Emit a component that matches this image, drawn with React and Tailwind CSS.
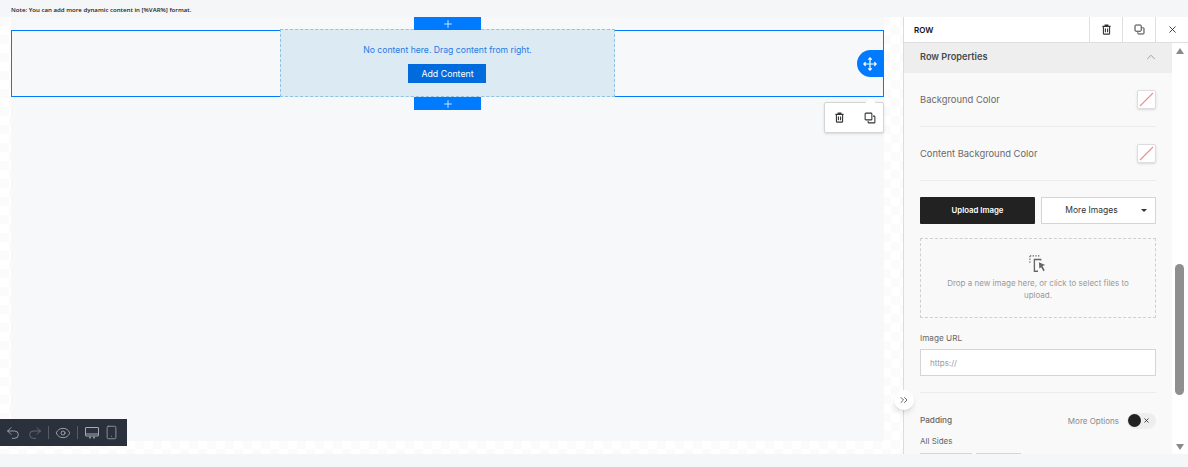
import React from "react";
import { Plus, X, ChevronUp, ChevronsRight, Undo2, Redo2, Eye, Smartphone } from "lucide-react";

const CopyIcon = ({ className }) => (
  <svg viewBox="0 0 16 16" className={className} fill="none" stroke="currentColor" strokeWidth="1.4">
    <rect x="1.5" y="1.5" width="9" height="9" rx="1" />
    <path d="M12 5.500h1.500a1 1 0 0 1 1 1v7a1 1 0 0 1-1 1h-7a1 1 0 0 1-1-1V12" />
  </svg>
);

const TrashIcon = ({ className }) => (
  <svg viewBox="0 0 16 16" className={className} fill="none" stroke="currentColor" strokeWidth="1.6">
    <path d="M2 3.500h12M6 3.500V1.700h4v1.800M3.500 3.500v10.200a1 1 0 0 0 1 1h7a1 1 0 0 0 1-1V3.500M6.400 6.500v5.500M9.600 6.500v5.500" />
  </svg>
);

const MoveIcon = () => (
  <svg viewBox="0 0 16 16" className="w-[14px] h-[14px]" fill="none" stroke="white" strokeWidth="1.4">
    <path d="M8 1v14M1 8h14M6 3l2-2 2 2M6 13l2 2 2-2M3 6 1 8l2 2M13 6l2 2-2 2" />
  </svg>
);

const DesktopIcon = () => (
  <svg viewBox="0 0 14 12" className="w-[14px] h-[12px]" fill="none" stroke="#a8adb5" strokeWidth="1">
    <rect x="0.5" y="0.5" width="13" height="8.500" rx="0.5" />
    <path d="M0.5 7h13" />
    <path d="M5 9.500v2M9 9.500v2" strokeWidth="1.500" />
  </svg>
);

const DropIcon = () => (
  <svg viewBox="0 0 20 20" className="w-[18px] h-[18px]" fill="none" stroke="#666" strokeWidth="1.2">
    <path d="M1 1h11M1 1v9" strokeDasharray="1.5 1.5" />
    <path d="M13 6V5H6v13h4" strokeWidth="1.5" />
    <path d="M11 8l7 3-3 1.200L17.500 17l-1.500 1-2.500-4.500L11.500 15z" fill="#666" stroke="none" />
  </svg>
);

const AddBar = () => (
  <div className="w-[67px] h-[13px] bg-[#007bff] flex items-center justify-center">
    <Plus className="w-[12px] h-[12px] text-white" strokeWidth={1.5} />
  </div>
);

const ColorRow = ({ label }) => (
  <div className="flex items-center justify-between">
    <span className="pt-[2px] text-[9.4px] text-[#6a6a6a]">{label}</span>
    <div className="w-[19px] h-[19px] bg-white border border-[#ddd] rounded-[2px] flex items-center justify-center shadow-sm">
      <svg viewBox="0 0 17 17" className="w-[17px] h-[17px]">
        <path d="M2 15 15 2" stroke="#f08a8f" strokeWidth="1.1" />
      </svg>
    </div>
  </div>
);

export default function App() {
  return (
    <div className="w-[1188px] h-[467px] overflow-hidden bg-[#f5f6f8] flex flex-col font-['Inter',sans-serif]">
      <div className="h-[17px] shrink-0 pl-[11px] pt-[5px] text-[6.100px] leading-[10px] font-semibold text-[#222] font-['Open_Sans',sans-serif]">
        Note: You can add more dynamic content in [%VAR%] format.
      </div>

      <div className="h-[437px] flex shrink-0">
        {/* canvas */}
        <div className="relative w-[903px] bg-[repeating-conic-gradient(#ffffff_0_25%,#fbfbfc_0_50%)] bg-[length:18px_18px] pl-[11px] pr-[19px]">
          <div className="h-[424px] bg-[#f7f8fa] pt-[13px]">
            <div className="relative h-[67px] border border-[#007bff] flex justify-center">
              <div className="absolute -top-[14px] left-[402px]"><AddBar /></div>
              <div className="absolute top-[66px] left-[402px]"><AddBar /></div>
              <div className="-mt-[2px] -mb-[1px] w-[335px] bg-[#dbeaf3] border border-dashed border-[#8cc4e4] flex flex-col items-center pt-[14px]">
                <div className="text-[8.650px] leading-[13px] text-[#1f7ae6]">No content here. Drag content from right.</div>
                <div className="mt-[7px] w-[78px] h-[19px] ml-[-1px] pl-[1px] bg-[#006bdc] text-white text-[8.800px] flex items-center justify-center">Add Content</div>
              </div>
              <div className="absolute right-0 top-[19px] w-[26px] h-[27px] bg-[#007bff] rounded-l-full flex items-center justify-center">
                <MoveIcon />
              </div>
              <div className="absolute right-[-1px] top-[71px] w-[60px] h-[31px] bg-white border border-[#d5d5d5] rounded-[2px] shadow-sm flex items-center justify-between pl-[9px] pr-[7px] text-[#333]">
                <div className="absolute -top-[4px] right-[9px] w-[7px] h-[7px] bg-white rotate-45" />
                <TrashIcon className="w-[11px] h-[11px]" />
                <CopyIcon className="w-[12px] h-[12px]" />
              </div>
            </div>
          </div>

          <div className="absolute left-0 top-[402px] w-[127px] h-[27px] bg-[#2a313c] flex items-center pl-[5px] text-[#a8adb5]">
            <Undo2 className="w-[16px] h-[16px]" strokeWidth={1.3} />
            <Redo2 className="w-[16px] h-[16px] ml-[6px] text-[#6b727c]" strokeWidth={1.3} />
            <div className="w-px h-[13px] bg-[#555c66] ml-[5px]" />
            <Eye className="w-[16px] h-[16px] ml-[6px]" strokeWidth={1.3} />
            <div className="w-px h-[13px] bg-[#555c66] ml-[6px]" />
            <div className="ml-[7px] flex"><DesktopIcon /></div>
            <Smartphone className="w-[15px] h-[15px] ml-[5px]" strokeWidth={1.200} />
          </div>
        </div>

        {/* settings panel */}
        <div className="relative w-[285px] bg-white border-l border-[#dcdcdc] flex flex-col">
          <div className="h-[26px] shrink-0 flex items-center border-b border-[#dfdfdf]">
            <div className="flex-1 pl-[10px] text-[8px] font-semibold text-[#111]">ROW</div>
            <div className="w-[33px] h-full border-l border-[#dfdfdf] flex items-center justify-center text-[#333]"><TrashIcon className="w-[11px] h-[11px]" /></div>
            <div className="w-[33px] h-full border-l border-[#dfdfdf] flex items-center justify-center text-[#333]"><CopyIcon className="w-[11px] h-[11px]" /></div>
            <div className="w-[33px] h-full border-l border-[#dfdfdf] flex items-center justify-center text-[#333]"><X className="w-[11px] h-[11px]" strokeWidth={2} /></div>
          </div>

          <div className="flex flex-1 min-h-0">
            <div className="w-[268px] bg-[#f9f9f9] overflow-hidden">
              <div className="h-[30px] bg-[#eeeeee] flex items-center justify-between pl-[16px] pr-[14px] pb-[2px]">
                <span className="text-[9.200px] font-semibold text-[#4a4a4a]">Row Properties</span>
                <ChevronUp className="w-[14px] h-[14px] text-[#888]" strokeWidth={1.3} />
              </div>
              <div className="px-[16px]">
                <div className="h-[54px] flex flex-col justify-center border-b border-[#ececec]"><ColorRow label="Background Color" /></div>
                <div className="h-[54px] flex flex-col justify-center border-b border-[#ececec]"><ColorRow label="Content Background Color" /></div>

                <div className="mt-[16px] flex gap-[6px]">
                  <div className="w-[115px] h-[27px] bg-[#222222] rounded-[1px] text-white text-[7.800px] font-semibold flex items-center justify-center">Upload Image</div>
                  <div className="relative w-[115px] h-[27px] bg-white border border-[#d5d5d5] text-[8.500px] text-[#333] flex items-center justify-center pr-[14px]">
                    More Images
                    <div className="absolute right-[8px] top-[11px] w-0 h-0 border-x-[3px] border-x-transparent border-t-[3px] border-t-[#333]" />
                  </div>
                </div>

                <div className="mt-[14px] h-[80px] border border-dashed border-[#cfcfcf] flex flex-col items-center pt-[16px]">
                  <DropIcon />
                  <p className="mt-[4px] text-[8px] leading-[12px] text-[#9a9a9a] text-center w-[200px]">Drop a new image here, or click to select files to upload.</p>
                </div>

                <div className="mt-[13px] text-[8.200px] leading-[14px] text-[#666]">Image URL</div>
                <div className="mt-[4px] h-[27px] bg-white border border-[#d5d5d5] flex items-center pl-[9px] text-[8px] text-[#9a9a9a]">https://</div>

                <div className="mt-[16px] border-t border-[#ececec] pt-[10px] flex items-center justify-between h-[46px]">
                  <span className="text-[8.200px] font-medium text-[#666]">Padding</span>
                  <div className="flex items-center">
                    <span className="text-[8px] text-[#8a8a8a] mr-[8px]">More Options</span>
                    <div className="w-[29px] h-[16px] rounded-full bg-[#eeeeee] flex items-center pl-[1px]">
                      <div className="w-[13px] h-[13px] rounded-full bg-[#222]" />
                      <X className="w-[7px] h-[7px] ml-[2px] text-[#333]" strokeWidth={3} />
                    </div>
                  </div>
                </div>
                <div className="-mt-[4px] text-[8px] leading-[14px] text-[#666]">All Sides</div>
                <div className="mt-[5px] flex">
                  <div className="w-[26px] h-[20px] bg-white border border-[#d5d5d5]" />
                  <div className="w-[27px] h-[20px] -ml-px bg-white border border-[#d5d5d5]" />
                  <div className="w-[23px] h-[20px] ml-[4px] bg-white border border-[#d5d5d5]" />
                  <div className="w-[23px] h-[20px] -ml-px bg-white border border-[#d5d5d5]" />
                </div>
              </div>
            </div>

            {/* scrollbar */}
            <div className="relative w-[16px] bg-white flex flex-col items-center">
              <div className="mt-[5px] w-0 h-0 border-x-[4.500px] border-x-transparent border-b-[6px] border-b-[#8a8a8a]" />
              <div className="absolute top-[221px] left-[3px] w-[9px] h-[131px] bg-[#8f8f8f] rounded-full" />
              <div className="absolute bottom-[4px] w-0 h-0 border-x-[4.500px] border-x-transparent border-t-[6px] border-t-[#8a8a8a]" />
            </div>
          </div>

          <div className="absolute left-[-10px] top-[373px] w-[20px] h-[20px] rounded-full bg-white shadow-md flex items-center justify-center text-[#333]">
            <ChevronsRight className="w-[12px] h-[12px]" strokeWidth={1.5} />
          </div>
        </div>
      </div>
    </div>
  );
}
